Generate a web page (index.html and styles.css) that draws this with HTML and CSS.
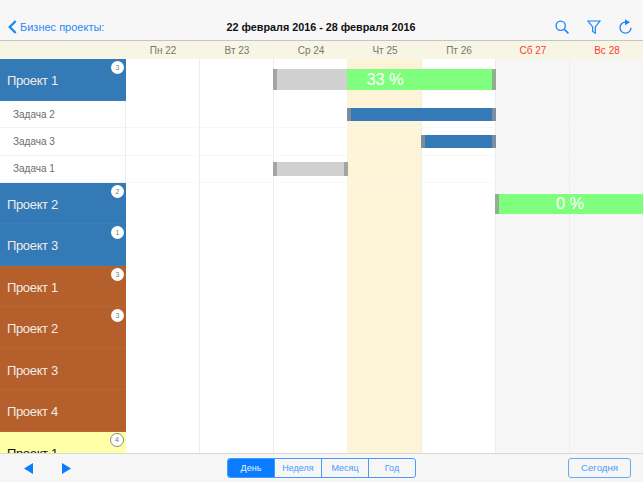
FILE: index.html
```html
<!DOCTYPE html>
<html lang="ru">
<head>
<meta charset="utf-8">
<title>Бизнес проекты</title>
<link rel="stylesheet" href="styles.css">
</head>
<body>
<div class="app">
  <header class="topbar">
    <a class="back">
      <svg class="back-icon" width="9" height="14" viewBox="0 0 9 14"><path d="M7.7 1 1.7 7l6 6" fill="none" stroke="#1a82fb" stroke-width="2.2"/></svg>
      <span>Бизнес проекты:</span>
    </a>
    <h1 class="range">22 февраля 2016 - 28 февраля 2016</h1>
    <div class="tools">
      <svg width="14" height="14" viewBox="0 0 14 14"><circle cx="5.7" cy="5.7" r="4.6" fill="none" stroke="#1a82fb" stroke-width="1.3"/><path d="M9 9l4.4 4.4" stroke="#1a82fb" stroke-width="1.6"/></svg>
      <svg width="14" height="14" viewBox="0 0 14 14"><path d="M1 1h12L8.3 7v6.2L5.7 11.4V7z" fill="none" stroke="#1a82fb" stroke-width="1.2"/></svg>
      <svg width="13" height="15" viewBox="0 0 13 15"><path d="M6.5 3.2a5.5 5.5 0 1 0 5.5 5.5" fill="none" stroke="#1a82fb" stroke-width="1.3"/><path d="M6 0.2 11 3.2 6 6.2z" fill="#1a82fb"/></svg>
    </div>
  </header>

  <div class="days">
    <div class="days-spacer"></div>
    <div class="day">Пн 22</div>
    <div class="day">Вт 23</div>
    <div class="day">Ср 24</div>
    <div class="day">Чт 25</div>
    <div class="day">Пт 26</div>
    <div class="day day-off">Сб 27</div>
    <div class="day day-off">Вс 28</div>
  </div>

  <main class="board">
    <aside class="side">
      <div class="row project first blue"><span>Проект 1</span><i class="badge">3</i></div>
      <div class="row task"><span>Задача 2</span></div>
      <div class="row task"><span>Задача 3</span></div>
      <div class="row task"><span>Задача 1</span></div>
      <div class="row project blue"><span>Проект 2</span><i class="badge">2</i></div>
      <div class="row project blue"><span>Проект 3</span><i class="badge">1</i></div>
      <div class="row project brown"><span>Проект 1</span><i class="badge">3</i></div>
      <div class="row project brown"><span>Проект 2</span><i class="badge">3</i></div>
      <div class="row project brown"><span>Проект 3</span></div>
      <div class="row project brown"><span>Проект 4</span></div>
      <div class="row project yellow"><span>Проект 1</span><i class="badge badge-ring">4</i></div>
    </aside>

    <section class="chart">
      <div class="col c1"></div>
      <div class="col c2"></div>
      <div class="col c3"></div>
      <div class="col c4 today"></div>
      <div class="col c5"></div>
      <div class="col c6 off"></div>
      <div class="col c7 off"></div>

      <div class="line l1"></div>
      <div class="line l2"></div>
      <div class="line l3"></div>

      <div class="bar bar-project r1 from3 span1 grey"><b class="cap"></b></div>
      <div class="bar bar-project r1 from4 span2 green"><b class="cap cap-end"></b></div>
      <div class="bar-label r1 from3 span3"><span>33 %</span></div>
      <div class="bar bar-task r2 from4 span2 steel"><b class="cap"></b><b class="cap cap-end"></b></div>
      <div class="bar bar-task r3 from5 span1 steel"><b class="cap"></b><b class="cap cap-end"></b></div>
      <div class="bar bar-task r4 from3 span1 grey"><b class="cap"></b><b class="cap cap-end"></b></div>
      <div class="bar bar-project lower r5 from6 span2 green"><b class="cap"></b></div>
      <div class="bar-label lower r5 from6 span2"><span>0 %</span></div>
    </section>
  </main>

  <footer class="bottombar">
    <div class="arrows">
      <svg width="9" height="11" viewBox="0 0 9 11"><path d="M9 0v11L0 5.500z" fill="#0a7cff"/></svg>
      <svg width="9" height="11" viewBox="0 0 9 11"><path d="M0 0v11l9-5.500z" fill="#0a7cff"/></svg>
    </div>
    <div class="segments">
      <span class="seg seg-on">День</span>
      <span class="seg">Неделя</span>
      <span class="seg">Месяц</span>
      <span class="seg">Год</span>
    </div>
    <span class="today-btn">Сегодня</span>
  </footer>
</div>
</body>
</html>
```

FILE: styles.css
```css
* { box-sizing: border-box; }
html, body { margin: 0; height: 100%; }
body { font-family: "Liberation Sans", Arial, sans-serif; background: #fff; }

.app { width: 643px; height: 482px; display: flex; flex-direction: column; overflow: hidden; }

/* top bar */
.topbar {
  height: 41px; flex: none;
  display: grid; grid-template-columns: 1fr auto 1fr; align-items: center;
  padding: 13px 11px 0 8px;
  background: #f7f7f7;
  border-bottom: 1px solid #c4c4c2;
}
.back { display: flex; align-items: center; gap: 3px; color: #2c88f5; font-size: 11px; }
.range { margin: 0; padding-left: 2px; font-size: 10.8px; font-weight: bold; color: #111; }
.tools { display: flex; justify-content: flex-end; align-items: center; gap: 18px; }

/* day strip */
.days {
  height: 18px; flex: none;
  display: grid; grid-template-columns: 126px repeat(7, 74px);
  background: #f7f5e3;
}
.day { text-align: center; font-size: 10px; line-height: 19px; color: #77776f; }
.day-off { color: #fb3a3a; }

/* board */
.board { height: 395px; flex: none; display: flex; overflow: hidden; border-bottom: 1px solid #d8d8d8; }

.side { width: 126px; flex: none; }
.row { position: relative; display: flex; align-items: center; }
.project { height: 41.5px; padding: 1px 0 0 7px; font-size: 13px; letter-spacing: -.35px; color: #f2ece6; }
.first { height: 42px; padding-top: 0; }
.task {
  height: 27.33px; padding-left: 13px; font-size: 10px; color: #6c6c6c;
  background: #fff; border-bottom: 1px solid #f2f2f2; border-right: 1px solid #eee;
}
.blue { background: #337ab7; box-shadow: inset 0 -1px 0 #3a7fb9; }
.brown { background: #b55f2c; box-shadow: inset 0 -1px 0 #ba6533; }
.yellow { background: #ffffa8; color: #111; }

.badge {
  position: absolute; top: 2px; right: 2px;
  width: 13px; height: 13px; border-radius: 50%;
  background: #fff; color: #777; font: normal 7px/13px "Liberation Sans", Arial, sans-serif;
  letter-spacing: 0; text-align: center;
}
.badge-ring { top: 1px; border: 1px solid #8a8a8a; line-height: 12px; width: 14px; height: 14px; }

/* chart */
.chart {
  flex: none; width: 517px; display: grid;
  grid-template-columns: repeat(7, 74px);
  grid-template-rows: 42px 27.33px 27.33px 27.33px 41.5px 1fr;
}
.col { grid-row: 1 / -1; border-right: 1px solid #ededed; }
.c1 { grid-column: 1; } .c2 { grid-column: 2; } .c3 { grid-column: 3; }
.c4 { grid-column: 4; } .c5 { grid-column: 5; } .c6 { grid-column: 6; } .c7 { grid-column: 7; }
.today { background: #fdf3d6; border-right-color: #f0ecdf; margin-left: -1px; }
.off { background: #f6f6f6; }

.line { grid-column: 1 / -1; border-bottom: 1px solid rgba(246, 246, 246, .85); }
.l1 { grid-row: 2; } .l2 { grid-row: 3; } .l3 { grid-row: 4; }

.bar { position: relative; margin-left: -1px; align-self: start; }
.bar-project { margin-top: 10px; height: 21px; }
.bar-task { margin-top: 6.5px; height: 13.5px; }
.lower { margin-top: 11px; height: 20px; }

.bar-label {
  position: relative; align-self: start; margin-top: 10px; height: 21px;
  display: flex; align-items: center; justify-content: center;
  font-size: 16.5px; color: #fff; letter-spacing: -.2px;
}
.bar-label.lower { margin-top: 11px; height: 20px; }

.r1 { grid-row: 1; } .r2 { grid-row: 2; } .r3 { grid-row: 3; } .r4 { grid-row: 4; } .r5 { grid-row: 5; }
.from3 { grid-column-start: 3; } .from4 { grid-column-start: 4; }
.from5 { grid-column-start: 5; } .from6 { grid-column-start: 6; }
.span1 { grid-column-end: span 1; } .span2 { grid-column-end: span 2; } .span3 { grid-column-end: span 3; }
.grey { background: #d0d0d0; }
.green { background: #80ff7e; }
.steel { background: #337ab7; }

.cap { position: absolute; left: 0; top: 0; bottom: 0; width: 4px; background: rgba(150, 150, 150, .75); }
.cap-end { left: auto; right: 0; }

/* bottom bar */
.bottombar {
  flex: 1;
  display: grid; grid-template-columns: 203px auto 1fr; align-items: center;
  background: #f6f6f6;
  padding: 0 12px 0 24px;
}
.arrows { display: flex; gap: 29px; }
.segments {
  display: flex; height: 20px; width: 189px;
  border: 1px solid #4a9bf8; border-radius: 3px; overflow: hidden;
}
.seg {
  flex: 1; text-align: center; font-size: 9px; line-height: 18px; color: #4a9bf8;
  border-left: 1px solid #4a9bf8;
}
.seg:first-child { border-left: 0; }
.seg-on { background: #0a7cff; color: #e8f2ff; }
.today-btn {
  justify-self: end; width: 63px; height: 20px;
  border: 1px solid #6aaaf8; border-radius: 3px;
  text-align: center; font-size: 9.7px; line-height: 18px; color: #4a9bf8;
}
```
